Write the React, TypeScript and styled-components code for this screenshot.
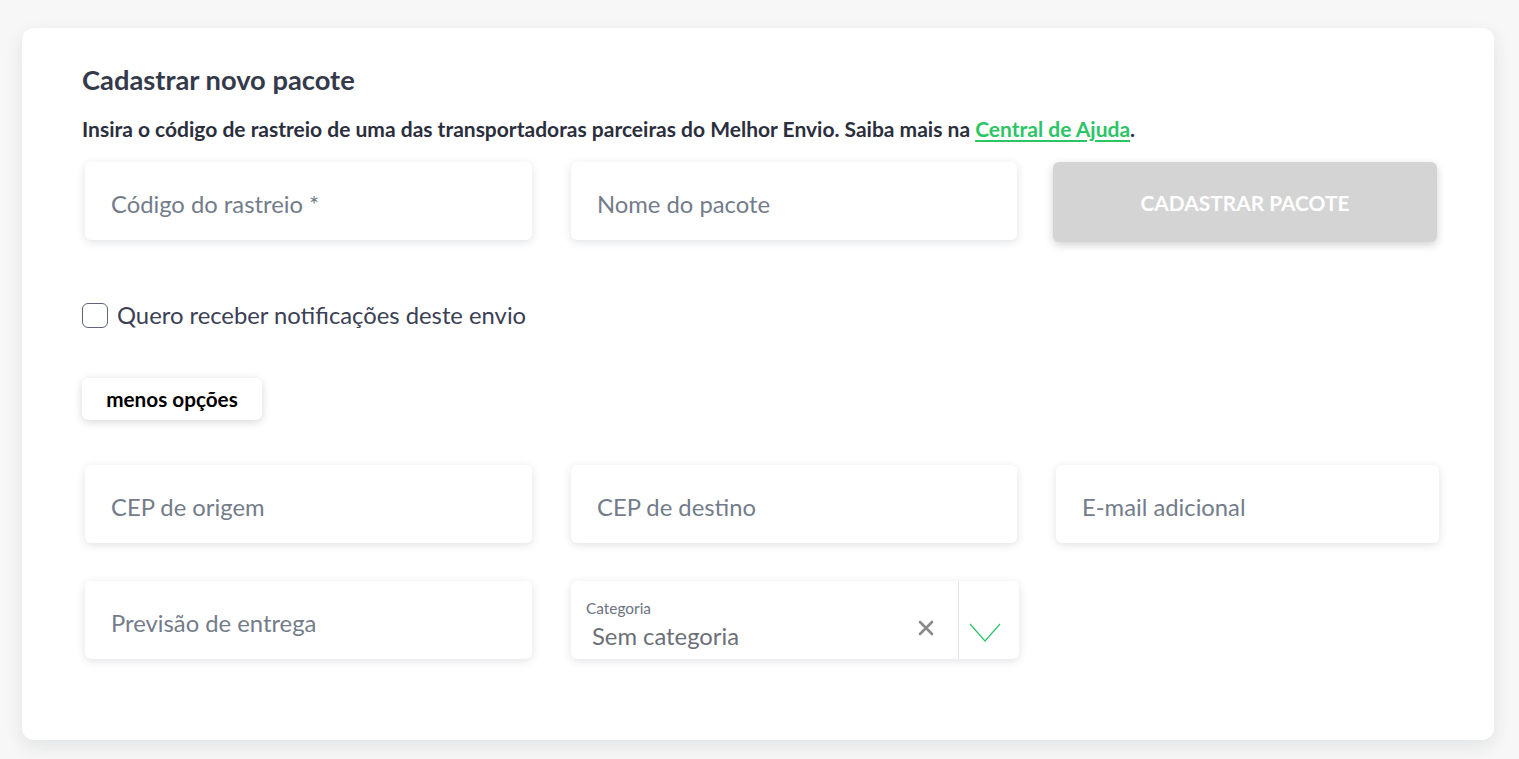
import styled, { createGlobalStyle } from "styled-components";

const GlobalStyle = createGlobalStyle`
  html, body {
    margin: 0;
    padding: 0;
    background: #f7f7f7;
    font-family: Lato, "Open Sans", sans-serif;
  }
  * { box-sizing: border-box; }
`;

const Page = styled.div`
  padding: 28px 25px 19px 22px;
  min-height: 759px;
`;

const Card = styled.section`
  background: #fff;
  border-radius: 12px;
  box-shadow: 0 6px 18px rgba(40, 50, 70, 0.1);
  padding: 36px 54px 80px 60px;
  min-height: 712px;
`;

const Title = styled.h2`
  margin: 0 0 21px;
  font-size: 27.3px;
  font-weight: 700;
  color: #343a4b;
  line-height: 32px;
`;

const Lead = styled.p`
  margin: 0 0 21px;
  font-size: 21px;
  font-weight: 700;
  color: #2b2f3d;
  line-height: 24px;
  white-space: nowrap;

  a {
    color: #2bc566;
    text-decoration: underline;
    text-underline-offset: 3px;
  }
`;

const Grid = styled.div`
  display: grid;
  grid-template-columns: 447px 446px 383px;
  column-gap: 39px;
  row-gap: 38px;
  padding-left: 3px;
`;

const Field = styled.div`
  height: 78px;
  background: #fff;
  border-radius: 6px;
  box-shadow: 0 2px 8px rgba(40, 50, 70, 0.14);
  display: flex;
  align-items: center;
  padding: 6px 26px 0;
  font-size: 23.8px;
  color: #737c8a;
`;

const SubmitButton = styled.button`
  height: 80px;
  width: 384px;
  margin-left: -3px;
  border: none;
  border-radius: 6px;
  background: #d4d4d4;
  color: #fff;
  font-family: Lato, sans-serif;
  font-weight: 700;
  font-size: 20.9px;
  text-transform: uppercase;
  box-shadow: 0 3px 8px rgba(0, 0, 0, 0.18);
  cursor: default;
`;

const CheckRow = styled.label`
  display: flex;
  align-items: center;
  gap: 9px;
  margin: 59px 0 0;
  font-size: 23.8px;
  color: #3b4054;
`;

const Box = styled.span`
  width: 26px;
  height: 25px;
  border: 1.5px solid #5d6679;
  border-radius: 6px;
`;

const ToggleButton = styled.button`
  margin: 49px 0 45px;
  height: 42px;
  width: 180px;
  border: none;
  border-radius: 6px;
  background: #fff;
  box-shadow: 0 2px 8px rgba(0, 0, 0, 0.16);
  font-family: Lato, sans-serif;
  font-weight: 700;
  font-size: 20.7px;
  color: #000;
`;

const Select = styled.div`
  height: 78px;
  width: 448px;
  background: #fff;
  border-radius: 6px;
  box-shadow: 0 2px 8px rgba(40, 50, 70, 0.14);
  display: flex;
`;

const SelectBody = styled.div`
  flex: 1;
  padding: 18px 0 0 15px;
  display: flex;
  flex-direction: column;
`;

const SelectLabel = styled.span`
  font-size: 15.4px;
  color: #6b7280;
  line-height: 18px;
`;

const SelectValue = styled.span`
  padding-left: 6px;
  margin-top: 3px;
  font-size: 23.8px;
  color: #6b6f78;
  line-height: 32px;
`;

const Clear = styled.span`
  display: flex;
  align-items: center;
  padding: 16px 24px 0 0;
  color: #8a8a8a;
`;

const Arrow = styled.span`
  width: 61px;
  border-left: 1px solid #e6e6e6;
  display: flex;
  align-items: center;
  justify-content: center;
  padding: 26px 9px 0 0;
`;

export default function App() {
  return (
    <>
      <GlobalStyle />
      <Page>
        <Card>
          <Title>Cadastrar novo pacote</Title>
          <Lead>
            Insira o código de rastreio de uma das transportadoras parceiras do
            Melhor Envio. Saiba mais na <a href="#">Central de Ajuda</a>.
          </Lead>
          <Grid>
            <Field>Código do rastreio *</Field>
            <Field>Nome do pacote</Field>
            <SubmitButton>Cadastrar pacote</SubmitButton>
          </Grid>
          <CheckRow>
            <Box />
            Quero receber notificações deste envio
          </CheckRow>
          <ToggleButton>menos opções</ToggleButton>
          <Grid>
            <Field>CEP de origem</Field>
            <Field>CEP de destino</Field>
            <Field>E-mail adicional</Field>
            <Field>Previsão de entrega</Field>
            <Select>
              <SelectBody>
                <SelectLabel>Categoria</SelectLabel>
                <SelectValue>Sem categoria</SelectValue>
              </SelectBody>
              <Clear>
                <svg width="16" height="16" viewBox="0 0 16 16">
                  <path d="M2 2L14 14M14 2L2 14" stroke="#8a8a8a" strokeWidth="2.6" strokeLinecap="round" />
                </svg>
              </Clear>
              <Arrow>
                <svg width="32" height="20" viewBox="0 0 32 20">
                  <path d="M1 1L16 18L31 1" fill="none" stroke="#2bc566" strokeWidth="1.2" />
                </svg>
              </Arrow>
            </Select>
          </Grid>
        </Card>
      </Page>
    </>
  );
}
